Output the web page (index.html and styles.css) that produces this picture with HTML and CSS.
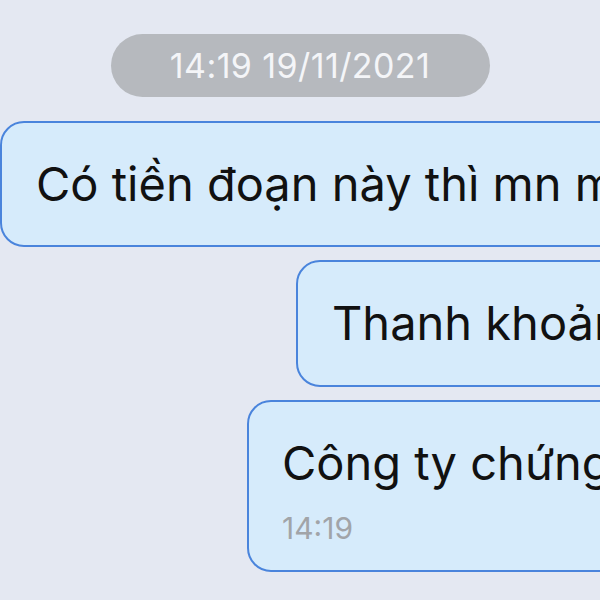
FILE: index.html
```html
<!DOCTYPE html>
<html lang="vi">
<head>
<meta charset="utf-8">
<link rel="stylesheet" href="styles.css">
</head>
<body>
<div class="chat">
  <div class="stamp-row"><div class="stamp">14:19 19/11/2021</div></div>
  <div class="bubble b1">Có tiền đoạn này thì mn mua gì</div>
  <div class="bubble b2">Thanh khoản tăng mạnh</div>
  <div class="bubble b3">
    <div class="msg">Công ty chứng khoán</div>
    <div class="time">14:19</div>
  </div>
</div>
</body>
</html>
```
FILE: styles.css
```css
html, body {
  margin: 0;
  padding: 0;
  width: 600px;
  height: 600px;
  overflow: hidden;
  background: #e4e8f2;
}
.chat {
  display: flex;
  flex-direction: column;
  padding-top: 34px;
  font-family: Inter, "Noto Sans", sans-serif;
  color: #111;
}
.stamp-row {
  display: flex;
  justify-content: center;
  margin-bottom: 24px;
}
.stamp {
  width: 379px;
  height: 63px;
  border-radius: 32px;
  background: #b6b9be;
  color: #f4f5f8;
  font-size: 34px;
  display: flex;
  align-items: center;
  justify-content: center;
  letter-spacing: 0.4px;
}
.bubble {
  box-sizing: border-box;
  background: #d6ebfb;
  border: 2.5px solid #4a84dc;
  border-radius: 24px;
  white-space: nowrap;
  font-size: 47px;
  line-height: 56px;
  width: 900px;
  margin-bottom: 13px;
}
.b1 {
  margin-left: 0;
  height: 126px;
  padding: 33px 0 0 34px;
}
.b2 {
  margin-left: 296px;
  height: 127px;
  padding: 33px 0 0 34px;
}
.b3 {
  margin-left: 247px;
  height: 172px;
  padding: 33px 0 0 33px;
}
.time {
  font-size: 30px;
  line-height: 36px;
  color: #a1a4a8;
  margin-top: 19px;
}
```
